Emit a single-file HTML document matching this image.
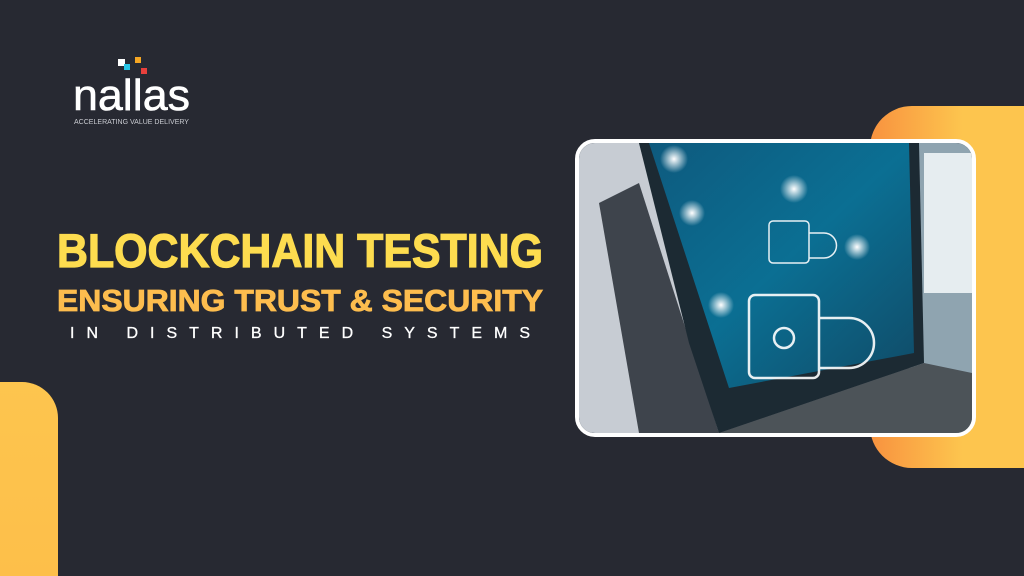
<!DOCTYPE html>
<html><head><meta charset="utf-8"><style>
html,body{margin:0;padding:0;}
body{width:1024px;height:576px;background:#272932;position:relative;overflow:hidden;font-family:"Liberation Sans",sans-serif;}
.abs{position:absolute;}
</style></head><body>
<div class="abs" style="left:0;top:382px;width:58px;height:194px;background:linear-gradient(180deg,#fdc54e,#fdbf4a);border-top-right-radius:36px;"></div>
<div class="abs" style="left:870px;top:106px;width:154px;height:362px;background:linear-gradient(90deg,#f8923f,#fdc54e 60%);border-radius:42px 0 0 42px;"></div>

<!-- logo -->
<div class="abs" style="left:118px;top:59px;width:7px;height:7px;background:#fff;"></div>
<div class="abs" style="left:124px;top:64px;width:6px;height:6px;background:#29c5e6;"></div>
<div class="abs" style="left:135px;top:57px;width:6px;height:6px;background:#f5a623;"></div>
<div class="abs" style="left:141px;top:68px;width:6px;height:6px;background:#e8403c;"></div>
<svg class="abs" style="left:0;top:0" width="580" height="576">
<text x="73" y="110" textLength="117" lengthAdjust="spacingAndGlyphs" font-family="Liberation Sans" font-size="44" fill="#fff" stroke="#fff" stroke-width="0.6">nallas</text>
<text x="74" y="124" textLength="115" lengthAdjust="spacingAndGlyphs" font-family="Liberation Sans" font-size="7.5" fill="#c9cbd1">ACCELERATING VALUE DELIVERY</text>
<text x="57" y="267" textLength="486" lengthAdjust="spacingAndGlyphs" font-family="Liberation Sans" font-weight="bold" font-size="47" fill="#fddc4f" stroke="#fddc4f" stroke-width="1.2">BLOCKCHAIN TESTING</text>
<text x="57" y="311" textLength="486" lengthAdjust="spacingAndGlyphs" font-family="Liberation Sans" font-weight="bold" font-size="31" fill="#fdbd4e" stroke="#fdbd4e" stroke-width="0.8">ENSURING TRUST &amp; SECURITY</text>
<text x="70" y="338" textLength="460" lengthAdjust="spacing" font-family="Liberation Sans" font-size="16" fill="#fff" stroke="#fff" stroke-width="0.3">IN  DISTRIBUTED  SYSTEMS</text>
</svg>

<div class="abs" style="left:575px;top:139px;width:393px;height:290px;border:4px solid #fff;border-radius:20px;overflow:hidden;background:#5a6068;">
<svg width="393" height="290" viewBox="0 0 393 290">
<defs>
<linearGradient id="scr" x1="0" y1="0" x2="1" y2="1"><stop offset="0" stop-color="#0e5a7e"/><stop offset="0.5" stop-color="#0b6f93"/><stop offset="1" stop-color="#104a66"/></linearGradient>
<radialGradient id="gl"><stop offset="0" stop-color="#fff"/><stop offset="1" stop-color="#fff" stop-opacity="0"/></radialGradient>
</defs>
<rect width="393" height="290" fill="#3d4a55"/>
<rect x="330" y="0" width="63" height="290" fill="#8fa4b0"/>
<rect x="345" y="10" width="48" height="140" fill="#e6edf0"/>
<polygon points="0,0 60,0 140,290 0,290" fill="#c7ccd3"/>
<polygon points="20,60 60,40 140,290 60,290" fill="#3e444c"/>
<polygon points="60,0 340,0 345,220 140,290 110,200" fill="#1c2a33"/>
<polygon points="70,0 330,0 335,210 150,245" fill="url(#scr)"/>
<polygon points="140,290 345,220 393,230 393,290" fill="#4c5358"/>
<g stroke="#fff" fill="none" stroke-width="2.5" opacity="0.9">
<rect x="170" y="152" width="70" height="83" rx="6"/>
<path d="M240 175 h30 a25 25 0 0 1 0 50 h-30"/>
<circle cx="205" cy="195" r="10"/>
<rect x="190" y="78" width="40" height="42" rx="4" stroke-width="1.5"/>
<path d="M230 90 h15 a12 12 0 0 1 0 25 h-15" stroke-width="1.5"/>
</g>
<g fill="url(#gl)">
<circle cx="95" cy="16" r="14"/><circle cx="215" cy="46" r="14"/><circle cx="113" cy="70" r="13"/><circle cx="278" cy="104" r="13"/><circle cx="142" cy="162" r="13"/>
</g>
</svg>
</div>
</body></html>
